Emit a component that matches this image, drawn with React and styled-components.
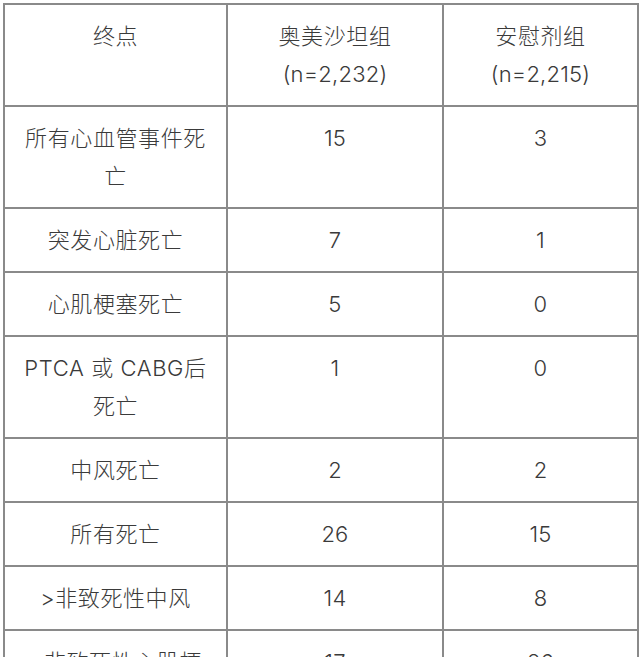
import styled, { createGlobalStyle } from "styled-components";

const GlobalStyle = createGlobalStyle`
  html, body {
    margin: 0;
    padding: 0;
    background: #ffffff;
  }
`;

const Page = styled.div`
  padding: 3px;
  font-family: Inter, "Noto Sans CJK SC", sans-serif;
  font-weight: 300;
  color: #3a3a3a;
`;

const Table = styled.table`
  width: 634px;
  table-layout: fixed;
  border-collapse: collapse;
  border: 2px solid #8a8a8a;
`;

const Cell = styled.td`
  border: 2px solid #8a8a8a;
  padding: 12px 16px;
  font-size: 22px;
  letter-spacing: 0.6px;
  line-height: 38px;
  text-align: center;
  vertical-align: top;
  word-break: break-all;
`;

const HeadCell = styled(Cell).attrs({ as: "th" })`
  font-weight: 300;
`;

const Count = styled.span`
  letter-spacing: 0.2px;
`;

const rows = [
  ["所有心血管事件死亡", "15", "3"],
  ["突发心脏死亡", "7", "1"],
  ["心肌梗塞死亡", "5", "0"],
  ["PTCA 或 CABG后死亡", "1", "0"],
  ["中风死亡", "2", "2"],
  ["所有死亡", "26", "15"],
  [">非致死性中风", "14", "8"],
  [">非致死性心肌梗死", "17", "26"],
];

export default function App() {
  return (
    <>
      <GlobalStyle />
      <Page>
        <Table>
          <colgroup>
            <col style={{ width: 223 }} />
            <col style={{ width: 216 }} />
            <col style={{ width: 195 }} />
          </colgroup>
          <thead>
            <tr>
              <HeadCell>终点</HeadCell>
              <HeadCell>
                奥美沙坦组
                <br />
                <Count>(n=2,232)</Count>
              </HeadCell>
              <HeadCell>
                安慰剂组
                <br />
                <Count>(n=2,215)</Count>
              </HeadCell>
            </tr>
          </thead>
          <tbody>
            {rows.map(([name, a, b]) => (
              <tr key={name}>
                <Cell>{name}</Cell>
                <Cell>
                  <Count>{a}</Count>
                </Cell>
                <Cell>
                  <Count>{b}</Count>
                </Cell>
              </tr>
            ))}
          </tbody>
        </Table>
      </Page>
    </>
  );
}
